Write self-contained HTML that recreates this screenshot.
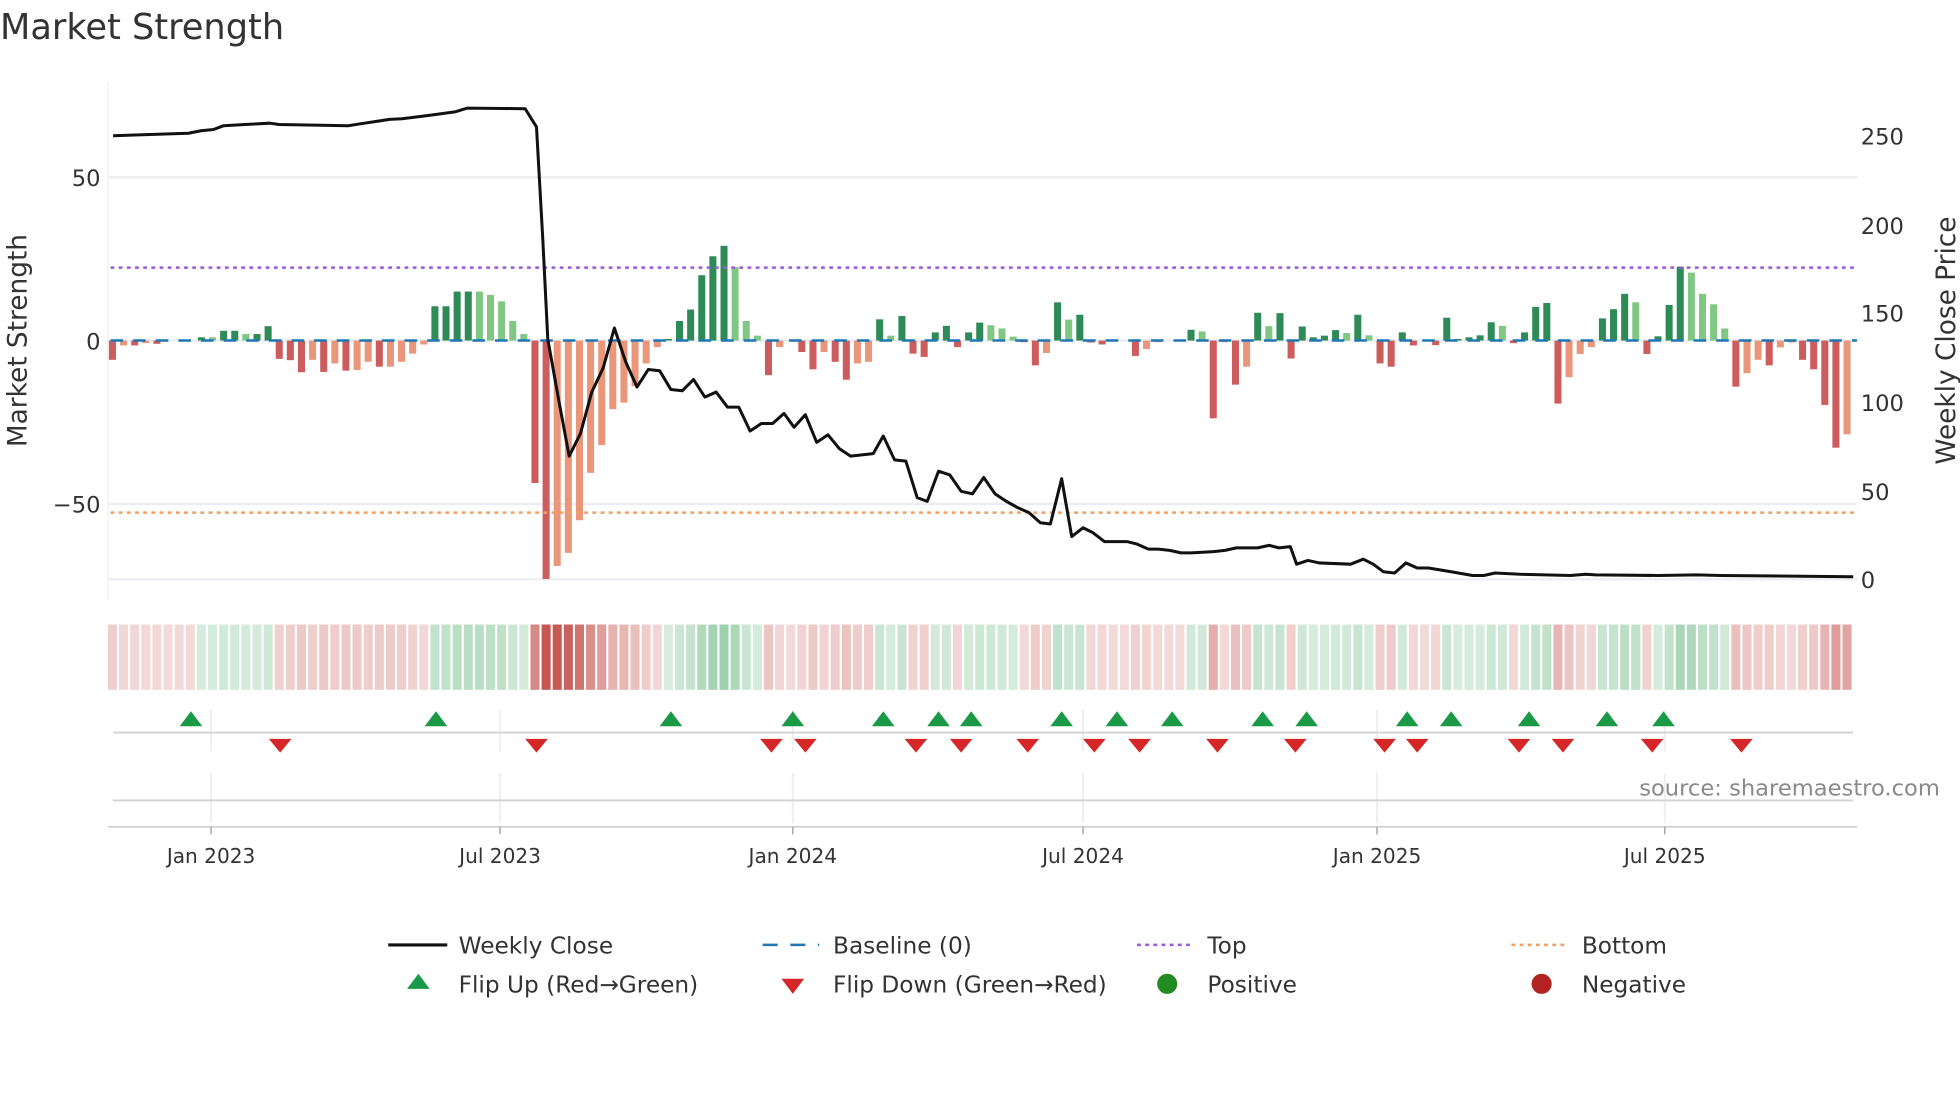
<!DOCTYPE html>
<html><head><meta charset="utf-8"><style>
html,body{margin:0;padding:0;background:#fff;width:1960px;height:1102px;overflow:hidden}
svg{display:block}
text{font-family:"DejaVu Sans","Liberation Sans",sans-serif;fill:#333}
</style></head><body>
<svg id="s" width="1960" height="1102" viewBox="0 0 1560 877" xmlns="http://www.w3.org/2000/svg">
<text x="0" y="31" font-size="28">Market Strength</text>
<g stroke="#eceef2" stroke-width="2">
<line x1="86" y1="141" x2="1478" y2="141"/><line x1="86" y1="271" x2="1478" y2="271"/>
<line x1="86" y1="401" x2="1478" y2="401"/><line x1="86" y1="461" x2="1478" y2="461"/>
</g>
<line x1="86" y1="65" x2="86" y2="478" stroke="#eee" stroke-width="1"/>
<g id="bars"></g>
<line x1="88" y1="271" x2="1478" y2="271" stroke="#1f77b4" stroke-width="2" stroke-dasharray="10,8"/>
<line x1="88" y1="213" x2="1478" y2="213" stroke="#9b59d6" stroke-width="2" stroke-dasharray="3,3.5"/>
<line x1="88" y1="408" x2="1478" y2="408" stroke="#f0a060" stroke-width="2" stroke-dasharray="3,3.5"/>
<polyline id="price" fill="none" stroke="#111" stroke-width="2.4" stroke-linejoin="round" points="90,108 150,106 160,104 170,103 178,100 195,99 215,98 222,99 250,99.5 277,100 290,98 310,95 320,94.5 340,92 362,89 372,86 400,86.3 418,86.5 427,101 432,190 436,270 445,320 453,363 462,345 471,312 480,293 489,261 498,288 507,308 516,294 525,295 534,310 543,311 552,302 561,316 570,312 579,324 588,324 597,343 606,337 615,337 624,329 632,340 641,330 650,352 659,346 668,357 677,363 686,362 695,361 703,347 712,366 721,367 730,396 738,399 747,375 756,378 765,391 774,393 783,380 792,393 801,399 810,404 819,408 828,416 836,417 845,381 853,427 862,420 870,424 879,431 897,431 905,433 914,437 922,437 931,438 940,440 948,440 966,439 975,438 984,436 1001,436 1010,434 1018,436 1027,435 1032,449 1041,446 1050,448 1075,449 1085,445 1093,449 1101,455 1110,456 1119,448 1128,452 1137,452 1155,455 1172,458 1181,458 1190,456 1210,457 1250,458 1262,457 1270,457.5 1320,458 1350,457.5 1370,458 1475,459"/>
<g font-size="18">
<text x="80" y="148" text-anchor="end">50</text><text x="80" y="278" text-anchor="end">0</text><text x="80" y="408" text-anchor="end">−50</text>
<text x="1481" y="115">250</text><text x="1481" y="186">200</text><text x="1481" y="256">150</text><text x="1481" y="327">100</text><text x="1481" y="398">50</text><text x="1481" y="468">0</text>
</g>
<text transform="translate(21,271) rotate(-90)" text-anchor="middle" font-size="21">Market Strength</text>
<text transform="translate(1556,271) rotate(-90)" text-anchor="middle" font-size="21">Weekly Close Price</text>
<g id="strip"></g>
<g stroke="#eceef2" stroke-width="1.5">
<line x1="168" y1="565" x2="168" y2="598"/><line x1="398" y1="565" x2="398" y2="598"/><line x1="631" y1="565" x2="631" y2="598"/><line x1="862" y1="565" x2="862" y2="598"/><line x1="1096" y1="565" x2="1096" y2="598"/><line x1="1325" y1="565" x2="1325" y2="598"/>
<line x1="168" y1="615" x2="168" y2="655"/><line x1="398" y1="615" x2="398" y2="655"/><line x1="631" y1="615" x2="631" y2="655"/><line x1="862" y1="615" x2="862" y2="655"/><line x1="1096" y1="615" x2="1096" y2="655"/><line x1="1325" y1="615" x2="1325" y2="655"/>
</g>
<line x1="90" y1="583" x2="1475" y2="583" stroke="#d0d2d6" stroke-width="1.5"/>
<line x1="90" y1="637" x2="1475" y2="637" stroke="#d0d2d6" stroke-width="1.5"/>
<line x1="86" y1="658" x2="1478" y2="658" stroke="#d0d2d6" stroke-width="1.5"/>
<g stroke="#aaa" stroke-width="1.2">
<line x1="168" y1="658" x2="168" y2="664"/><line x1="398" y1="658" x2="398" y2="664"/><line x1="631" y1="658" x2="631" y2="664"/><line x1="862" y1="658" x2="862" y2="664"/><line x1="1096" y1="658" x2="1096" y2="664"/><line x1="1325" y1="658" x2="1325" y2="664"/>
</g>
<g id="marks"></g>
<g font-size="16" text-anchor="middle">
<text x="168" y="687">Jan 2023</text><text x="398" y="687">Jul 2023</text><text x="631" y="687">Jan 2024</text><text x="862" y="687">Jul 2024</text><text x="1096" y="687">Jan 2025</text><text x="1325" y="687">Jul 2025</text>
</g>
<text x="1544" y="633" text-anchor="end" font-size="18" style="fill:#8a8a8a">source: sharemaestro.com</text>
<g font-size="18.5">
<line x1="309" y1="752" x2="356" y2="752" stroke="#111" stroke-width="2.5"/><text x="365" y="759">Weekly Close</text>
<line x1="607" y1="752" x2="652" y2="752" stroke="#1f77b4" stroke-width="2" stroke-dasharray="12,10"/><text x="663" y="759">Baseline (0)</text>
<line x1="905" y1="752" x2="950" y2="752" stroke="#9b59d6" stroke-width="2" stroke-dasharray="3,3.5"/><text x="961" y="759">Top</text>
<line x1="1203" y1="752" x2="1248" y2="752" stroke="#f0a060" stroke-width="2" stroke-dasharray="3,3.5"/><text x="1259" y="759">Bottom</text>
<polygon points="324,787 342,787 333,775" fill="#1a9a46"/><text x="365" y="790">Flip Up (Red→Green)</text>
<polygon points="622,779 640,779 631,791" fill="#d62728"/><text x="663" y="790">Flip Down (Green→Red)</text>
<circle cx="929" cy="783" r="8" fill="#228b22"/><text x="961" y="790">Positive</text>
<circle cx="1227" cy="783" r="8" fill="#b22222"/><text x="1259" y="790">Negative</text>
</g>
</svg>
<script>
var d="R-5.9 r-1.5 R-1.5 r-0.8 R-1 0 0 0 G1 g1 G3 G3 g2 G2 G4.4 R-5.6 R-6 R-9.7 r-5.9 R-9.6 r-7 R-9.2 r-9 r-6.5 R-8 r-8 r-6.5 r-4 r-1.2 G10.5 G10.5 G15 G15 g15 g14 g12 g6 g2 R-43.6 R-73 r-69 r-65 r-55 r-40.5 r-32 r-21 r-19 r-14 r-7 r-2 G0.5 G6 G9.5 G20 G25.8 G29 g22.5 g6 g1.5 R-10.6 r-2 0 R-3.5 R-8.8 r-3.5 R-6.5 R-12 r-7 r-6.5 G6.5 g1.5 G7.5 R-4 R-5 G2.5 G4.5 R-2 G2.5 G5.5 g4.7 g3.7 g1.2 R-0.5 R-7.6 r-3.8 G11.7 g6.4 G7.9 R-0.6 R-1.2 0 0 R-4.7 r-2.6 r-0.5 0 0 G3.3 g2.8 R-23.8 r-0.5 R-13.5 r-8 G8.5 g4.4 G8.4 R-5.5 G4.3 G1 G1.5 G3.2 g2.3 G7.9 g1.6 R-7 R-8 G2.5 R-1.5 0 R-1.4 G7 G0.5 G1 G1.6 G5.6 g4.5 R-0.8 G2.5 G10.3 G11.5 R-19.3 r-11.2 r-4.1 r-2 G6.8 G9.6 G14.3 g11.7 R-4.1 G1.3 G10.9 G22.6 g20.8 g14.3 g11.1 g3.7 R-14.1 r-10 r-5.9 R-7.6 r-2.1 r-0.6 R-5.9 R-8.8 R-19.7 R-32.8 r-28.7".split(" ");
var C={G:"#2e8b57",g:"#81c784",R:"#cd5c5c",r:"#e9967a"};
var ns="http://www.w3.org/2000/svg",B=document.getElementById("bars"),S=document.getElementById("strip");
function el(t,a,p){var e=document.createElementNS(ns,t);for(var k in a)e.setAttribute(k,a[k]);p.appendChild(e);return e}
var prev=-1;
for(var i=0;i<d.length;i++){var x=89.5+i*8.85,c=d[i][0],v=c=="0"?0:parseFloat(d[i].slice(1));
 if(v!=0){var h=Math.abs(v)*2.6;el("rect",{x:x-2.8,y:v>0?271-h:271,width:5.6,height:h,fill:C[c]},B);prev=v>0?1:-1;}
 var sg=v>0?1:(v<0?-1:prev),a=0.2+0.7*Math.min(Math.abs(v)/70,1);
 el("rect",{x:x-3.6,y:497,width:7.2,height:52,fill:sg>0?"#3aa05a":"#c0453f","fill-opacity":a},S);}
var M=document.getElementById("marks");
[152,347,534,631,703,747,773,845,889,933,1005,1040,1120,1155,1217,1279,1324].forEach(function(x){el("polygon",{points:(x-9)+",578 "+(x+9)+",578 "+x+",566",fill:"#1a9a46"},M)});
[223,427,614,641,729,765,818,871,907,969,1031,1102,1128,1209,1244,1315,1386].forEach(function(x){el("polygon",{points:(x-9)+",588 "+(x+9)+",588 "+x+",599",fill:"#d62728"},M)});
</script>
</body></html>
